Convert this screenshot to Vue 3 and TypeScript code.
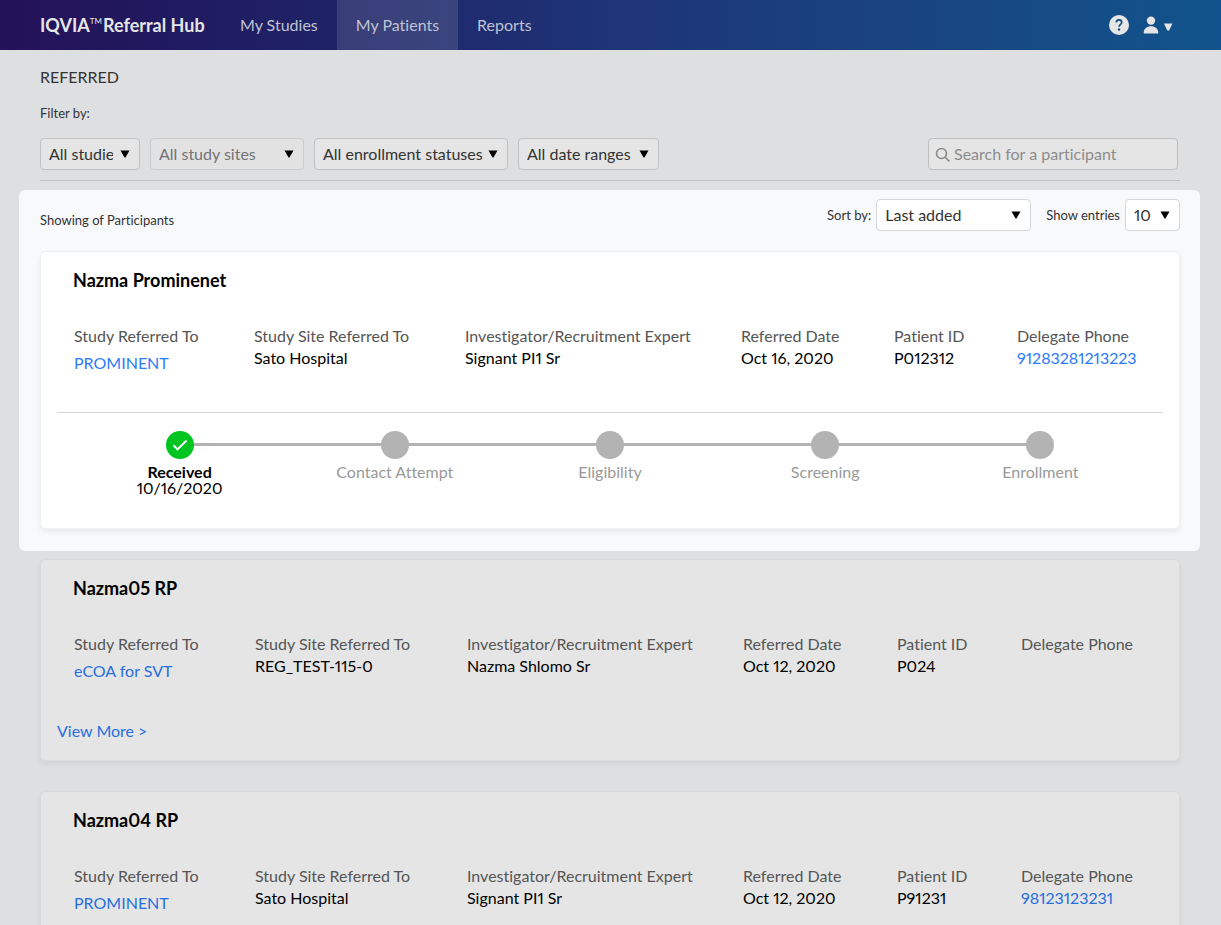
<script setup lang="ts">
interface Field {
  label: string
  value: string
  link?: boolean
  study?: boolean
}

interface Participant {
  name: string
  expanded: boolean
  fields: Field[]
}

interface Step {
  label: string
  date?: string
}

const tabs: string[] = ['My Studies', 'My Patients', 'Reports']
const activeTab = 'My Patients'

const filters = [
  { id: 'studies', label: 'Study', value: 'All studies', disabled: false },
  { id: 'sites', label: 'Study site', value: 'All study sites', disabled: true },
  { id: 'statuses', label: 'Enrollment status', value: 'All enrollment statuses', disabled: false },
  { id: 'dates', label: 'Date range', value: 'All date ranges', disabled: false },
]

function toFields(
  study: string,
  site: string,
  expert: string,
  date: string,
  id: string,
  phone: string,
): Field[] {
  return [
    { label: 'Study Referred To', value: study, link: true, study: true },
    { label: 'Study Site Referred To', value: site },
    { label: 'Investigator/Recruitment Expert', value: expert },
    { label: 'Referred Date', value: date },
    { label: 'Patient ID', value: id },
    { label: 'Delegate Phone', value: phone, link: true },
  ]
}

const participants: Participant[] = [
  {
    name: 'Nazma Prominenet',
    expanded: true,
    fields: toFields('PROMINENT', 'Sato Hospital', 'Signant PI1 Sr', 'Oct 16, 2020', 'P012312', '91283281213223'),
  },
  {
    name: 'Nazma05 RP',
    expanded: false,
    fields: toFields('eCOA for SVT', 'REG_TEST-115-0', 'Nazma Shlomo Sr', 'Oct 12, 2020', 'P024', ''),
  },
  {
    name: 'Nazma04 RP',
    expanded: false,
    fields: toFields('PROMINENT', 'Sato Hospital', 'Signant PI1 Sr', 'Oct 12, 2020', 'P91231', '98123123231'),
  },
]

const steps: Step[] = [
  { label: 'Received', date: '10/16/2020' },
  { label: 'Contact Attempt' },
  { label: 'Eligibility' },
  { label: 'Screening' },
  { label: 'Enrollment' },
]
</script>

<template>
  <div class="app">
    <header class="topbar">
      <a class="brand" href="#">IQVIA<span class="tm">TM</span>Referral Hub</a>
      <nav class="tabs">
        <a
          v-for="tab in tabs"
          :key="tab"
          href="#"
          class="tab"
          :class="{ 'tab--active': tab === activeTab }"
          >{{ tab }}</a
        >
      </nav>
      <div class="tools">
        <button class="tool" type="button" aria-label="Help">
          <svg width="20" height="20" viewBox="0 0 20 20">
            <circle cx="10" cy="10" r="10" fill="#e5e5e5" />
            <path
              d="M7.3 7.6C7.3 5.9 8.5 4.9 10 4.9s2.7 1 2.7 2.5c0 2-2.6 2.1-2.6 4.4"
              fill="none"
              stroke="#164c86"
              stroke-width="1.7"
            />
            <circle cx="10" cy="14.5" r="1.2" fill="#164c86" />
          </svg>
        </button>
        <button class="tool" type="button" aria-label="Account">
          <svg width="30" height="18" viewBox="0 0 30 18">
            <circle cx="8" cy="4.6" r="4.2" fill="#e5e5e5" />
            <path d="M.8 17.6v-1.4C.8 12.6 4 10.200 8 10.200s7.200 2.400 7.200 6v1.400z" fill="#e5e5e5" />
            <path d="M21 7.500h8.400l-3 6.600q-1.200 1.200-2.400 0z" fill="#e5e5e5" />
          </svg>
        </button>
      </div>
    </header>

    <main class="page">
      <section class="filters">
        <h1 class="title">REFERRED</h1>
        <p class="small">Filter by:</p>
        <div class="filter-row">
          <span
            v-for="filter in filters"
            :key="filter.id"
            class="picker picker--dim"
            :class="['picker--' + filter.id, { 'picker--disabled': filter.disabled }]"
          >
            <select :aria-label="filter.label" :disabled="filter.disabled">
              <option>{{ filter.value }}</option>
            </select>
            <svg class="caret" width="10" height="8" viewBox="0 0 10 8">
              <path d="M.5.500h9L5.600 7.200q-.6.700-1.200 0z" />
            </svg>
          </span>
          <label class="search">
            <svg width="16" height="16" viewBox="0 0 16 16">
              <circle cx="6.500" cy="7.500" r="5" />
              <path d="M10.200 11.200l4.200 4.200" />
            </svg>
            <input type="search" placeholder="Search for a participant" aria-label="Search for a participant" />
          </label>
        </div>
      </section>

      <div class="list">
        <section
          v-for="person in participants"
          :key="person.name"
          class="entry"
          :class="person.expanded ? 'entry--focus' : 'entry--dim'"
        >
          <div v-if="person.expanded" class="list-bar">
            <p class="small">Showing of Participants</p>
            <div class="list-controls">
              <label class="small" for="sort">Sort by:</label>
              <span class="picker picker--sort">
                <select id="sort">
                  <option>Last added</option>
                </select>
                <svg class="caret" width="10" height="8" viewBox="0 0 10 8">
                  <path d="M.5.500h9L5.600 7.200q-.6.700-1.200 0z" />
                </svg>
              </span>
              <label class="small entries-label" for="entries">Show entries</label>
              <span class="picker picker--entries">
                <select id="entries">
                  <option>10</option>
                </select>
                <svg class="caret" width="10" height="8" viewBox="0 0 10 8">
                  <path d="M.5.500h9L5.600 7.200q-.6.700-1.200 0z" />
                </svg>
              </span>
            </div>
          </div>

          <article class="card">
            <h2 class="name">{{ person.name }}</h2>
            <table class="details">
              <thead>
                <tr>
                  <th v-for="field in person.fields" :key="field.label" scope="col">{{ field.label }}</th>
                </tr>
              </thead>
              <tbody>
                <tr>
                  <td v-for="field in person.fields" :key="field.label" :class="{ study: field.study }">
                    <a v-if="field.link" href="#">{{ field.value }}</a>
                    <template v-else>{{ field.value }}</template>
                  </td>
                </tr>
              </tbody>
            </table>

            <ol v-if="person.expanded" class="steps">
              <li v-for="step in steps" :key="step.label" class="step" :class="{ 'step--done': step.date }">
                <span class="dot">
                  <svg v-if="step.date" width="16" height="12" viewBox="0 0 16 12">
                    <path d="M1.500 6.200l4 4.200L14.500 1.500" />
                  </svg>
                </span>
                <span class="step-label">{{ step.label }}</span>
                <span v-if="step.date" class="step-date">{{ step.date }}</span>
              </li>
            </ol>
            <a v-else class="more" href="#">View More &gt;</a>
          </article>
        </section>
      </div>
    </main>
  </div>
</template>

<style>
body {
  margin: 0;
}
</style>

<style scoped>
.app {
  height: 100vh;
  overflow-y: auto;
  scrollbar-width: none;
  background: #dedfe1;
  color: #333;
  font-family: Lato, 'Liberation Sans', sans-serif;
  font-size: 16px;
  font-variant-ligatures: none;
  font-variant-numeric: proportional-nums;
  line-height: 20px;
}

.app * {
  box-sizing: border-box;
}

a {
  color: inherit;
  text-decoration: none;
}

h1,
h2,
p {
  margin: 0;
}

select,
input,
button {
  font: inherit;
  font-variant-ligatures: none;
  font-variant-numeric: proportional-nums;
  color: inherit;
}

.topbar {
  display: flex;
  height: 50px;
  padding: 0 48px 0 40px;
  background: linear-gradient(90deg, #231159 0%, #1f2165 25%, #1e3678 52%, #174983 82%, #11538c 100%);
  color: #bfc3d4;
}

.brand {
  display: flex;
  align-items: center;
  width: 181px;
  color: #e5e5e5;
  font-size: 18px;
  font-weight: 700;
  white-space: nowrap;
}

.tm {
  margin: 0 1px 8px 0;
  font-size: 8px;
  font-weight: 400;
  line-height: 8px;
}

.tabs {
  display: flex;
}

.tab {
  display: flex;
  align-items: center;
  padding: 0 19px;
}

.tab--active {
  background: rgba(229, 229, 229, 0.14);
}

.tools {
  display: flex;
  align-items: center;
  gap: 14px;
  margin-left: auto;
}

.tool {
  display: flex;
  padding: 0;
  border: 0;
  background: none;
}

.page {
  padding: 0 21px 0 19px;
}

.filters {
  margin: 0 20px 0 21px;
  padding: 17px 0 10px;
  border-bottom: 1px solid #bdbec0;
}

.title {
  font-size: 16px;
  font-weight: 400;
  line-height: 20px;
}

.small {
  font-size: 13px;
  line-height: 16px;
}

.title + .small {
  margin: 18px 0 17px;
}

.filter-row {
  display: flex;
  gap: 10px;
}

.picker {
  position: relative;
  flex: none;
  height: 32px;
}

.picker select {
  width: 100%;
  height: 100%;
  padding: 0 26px 1px 8px;
  border: 1px solid #d5d6d9;
  border-radius: 4px;
  appearance: none;
  background: #fff;
}

.picker--dim select {
  border-color: #c0c1c3;
  background: #e5e5e5;
}

.picker--disabled select {
  border-color: #cbccce;
  background: #e2e2e3;
  color: #737375;
  opacity: 1;
}

.caret {
  position: absolute;
  top: 12px;
  right: 10px;
  fill: #000;
  pointer-events: none;
}

.picker--studies {
  width: 100px;
}

.picker--sites {
  width: 154px;
}

.picker--statuses {
  width: 194px;
}

.picker--statuses select {
  padding-right: 20px;
}

.picker--dates {
  width: 141px;
}

.picker--sort {
  width: 155px;
}

.picker--entries {
  width: 55px;
}

.search {
  display: flex;
  align-items: center;
  gap: 3px;
  width: 250px;
  height: 32px;
  margin: 0 2px 0 auto;
  padding: 0 6px;
  border: 1px solid #bdbec0;
  border-radius: 4px;
  background: #e5e5e5;
}

.search svg {
  flex: none;
  fill: none;
  stroke: #8c8c8c;
  stroke-width: 1.6;
}

.search input {
  min-width: 0;
  flex: 1;
  padding: 0 0 1px;
  border: 0;
  outline: 0;
  background: none;
}

.search input::placeholder {
  color: #8c8c8c;
}

.list {
  padding-top: 9px;
}

.entry {
  padding: 0 20px 0 21px;
}

.entry--focus {
  padding-bottom: 22px;
  border-radius: 6px;
  background: #f8f9fb;
}

.entry--dim {
  padding-top: 8px;
}

.entry--dim + .entry--dim {
  padding-top: 30px;
}

.list-bar {
  display: flex;
  justify-content: space-between;
  padding: 9px 0 20px;
}

.list-bar > p {
  margin-top: 13px;
}

.list-controls {
  display: flex;
  align-items: center;
  gap: 5px;
}

.entries-label {
  margin-left: 10px;
}

.card {
  padding: 18px 16px 16px;
  border: 1px solid #eff0f2;
  border-radius: 5px;
  background: #fff;
  box-shadow: 0 3px 5px rgba(0, 0, 0, 0.06);
}

.entry--dim .card {
  border-color: #d8d9db;
  background: #e5e5e5;
}

.name {
  margin-left: 16px;
  color: #000;
  font-size: 18px;
  font-weight: 700;
  line-height: 20px;
}

.details {
  display: block;
  margin: 36px 0 0 17px;
}

.details thead,
.details tbody {
  display: block;
}

.details tr {
  display: grid;
  grid-template-columns: 180fr 211fr 276fr 153fr 123fr 146fr;
}

.entry--dim .details tr {
  grid-template-columns: 181fr 212fr 276fr 154fr 124fr 142fr;
}

.details th {
  padding: 0;
  color: #555;
  font-weight: 400;
  text-align: left;
  white-space: nowrap;
}

.details td {
  height: 27px;
  padding: 2px 0 0;
  color: #000;
}

.details td.study {
  padding-top: 7px;
}

.details a {
  color: #2b7bf8;
}

.entry--dim .details a,
.more {
  color: #276fdf;
}

.more {
  display: block;
  margin-top: 40px;
  padding-bottom: 3px;
}

.steps {
  display: flex;
  justify-content: center;
  margin: 39px 0 0;
  padding: 18px 15px 16px;
  border-top: 1px solid #d5d6d7;
  list-style: none;
}

.step {
  position: relative;
  display: flex;
  flex: 1;
  flex-direction: column;
  align-items: center;
  color: #999;
  line-height: 16px;
}

.step + .step::before {
  position: absolute;
  top: 12px;
  right: 50%;
  width: 100%;
  height: 3px;
  background: #b3b3b3;
  content: '';
}

.dot {
  z-index: 1;
  display: flex;
  align-items: center;
  justify-content: center;
  width: 28px;
  height: 28px;
  margin-bottom: 5px;
  border-radius: 50%;
  background: #b3b3b3;
}

.dot svg {
  fill: none;
  stroke: #fff;
  stroke-width: 2;
}

.step--done {
  z-index: 1;
  color: #000;
}

.step--done .dot {
  background: #00c41f;
}

.step--done .step-label {
  font-weight: 700;
}
</style>
